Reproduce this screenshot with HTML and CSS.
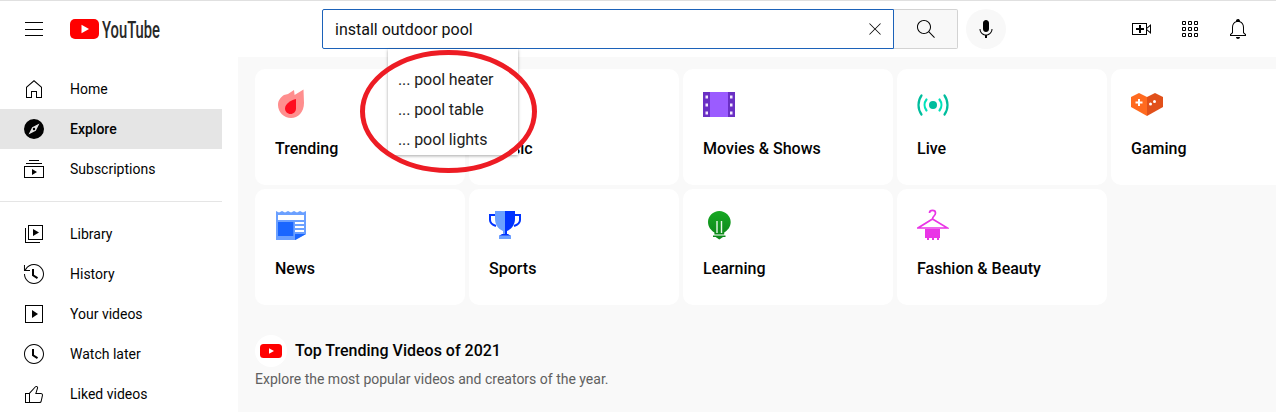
FILE: index.html
```html
<!DOCTYPE html>
<html lang="en">
<head>
<meta charset="utf-8">
<title>YouTube Explore</title>
<link rel="stylesheet" href="styles.css">
</head>
<body>
<header class="topbar">
  <div class="brand">
    <svg class="burger" viewBox="0 0 24 24"><path d="M3 5h18v1H3zM3 12h18v1H3zM3 18h18v1H3z"/></svg>
    <svg class="logo" viewBox="0 0 90 20">
      <rect x="0" y="0" width="29" height="20" rx="5" fill="#f00"/>
      <path d="M11.5 5.7 19 10l-7.500 4.300z" fill="#fff"/>
      <text x="32" y="18.500" class="wordmark" textLength="58" lengthAdjust="spacingAndGlyphs">YouTube</text>
    </svg>
  </div>
  <div class="search">
    <div class="search-box">
      <span class="query">install outdoor pool</span>
      <svg class="clear" viewBox="0 0 24 24"><path d="M12.700 12l6.150 6.150-.7.7L12 12.700l-6.150 6.150-.7-.7L11.300 12 5.150 5.850l.7-.7L12 11.300l6.150-6.150.7.7L12.700 12z"/></svg>
      <div class="suggest">
        <div class="suggest-row">... pool heater</div>
        <div class="suggest-row">... pool table</div>
        <div class="suggest-row">... pool lights</div>
      </div>
      <svg class="ring" viewBox="0 0 177 123"><ellipse cx="88.500" cy="61.500" rx="86" ry="59"/></svg>
    </div>
    <button class="search-btn"><svg class="ico" viewBox="0 0 24 24"><path d="M20.870 20.170l-5.590-5.590C16.350 13.350 17 11.750 17 10c0-3.870-3.130-7-7-7s-7 3.130-7 7 3.130 7 7 7c1.750 0 3.350-.65 4.580-1.710l5.590 5.590.7-.71zM10 16c-3.310 0-6-2.690-6-6s2.690-6 6-6 6 2.690 6 6-2.690 6-6 6z"/></svg></button>
    <button class="mic"><svg class="ico" viewBox="0 0 24 24"><path d="M12 3c-1.660 0-3 1.370-3 3.070v5.860C9 13.630 10.340 15 12 15s3-1.370 3-3.070V6.070C15 4.370 13.660 3 12 3zm6.500 9h-1c0 3.030-2.470 5.500-5.500 5.500S6.500 15.030 6.500 12h-1c0 3.240 2.390 5.930 5.500 6.410V21h2v-2.590c3.110-.48 5.500-3.170 5.500-6.410z"/></svg></button>
  </div>
  <div class="actions">
    <span class="action"><svg class="ico" viewBox="0 0 24 24"><path d="M14 13h-3v3H9v-3H6v-2h3V8h2v3h3v2zm3-2.500l4-3.500v10l-4-3.500V18H2V6h15v4.500zM16 7H3v10h13V7zm1 4.800v.4l3 2.600V9.200l-3 2.600z"/></svg></span>
    <span class="action"><svg class="ico" viewBox="0 0 24 24"><path d="M4.500 4.500h3v3h-3zM10.500 4.500h3v3h-3zM16.500 4.500h3v3h-3zM4.500 10.500h3v3h-3zM10.500 10.500h3v3h-3zM16.500 10.500h3v3h-3zM4.500 16.500h3v3h-3zM10.500 16.500h3v3h-3zM16.500 16.500h3v3h-3z" fill="none" stroke="#030303" stroke-width="1"/></svg></span>
    <span class="action"><svg class="ico" viewBox="0 0 24 24"><path d="M10 20h4c0 1.100-.9 2-2 2s-2-.9-2-2zm10-2.650V19H4v-1.650l2-1.880v-5.150C6 7.400 7.560 5.100 10 4.340v-.38c0-1.420 1.490-2.500 2.990-1.760.65.32 1.010 1.030 1.010 1.760v.39c2.440.75 4 3.060 4 5.980v5.150l2 1.870zm-1 .42-2-1.880v-5.470c0-2.470-1.190-4.360-3.130-5.100-1.260-.53-2.640-.5-3.840.03C8.150 6.110 7 7.990 7 10.420v5.470l-2 1.880V18h14v-.23z"/></svg></span>
  </div>
</header>

<div class="page">
  <nav class="sidebar">
    <div class="nav-group">
      <a class="nav-item"><svg class="ico" viewBox="0 0 24 24"><path d="M12 4.440l7 6.090V20h-4v-6H9v6H5v-9.470l7-6.090m0-1.320l-8 6.960V21h6v-6h4v6h6V10.080l-8-6.960z"/></svg><span>Home</span></a>
      <a class="nav-item active"><svg class="ico" viewBox="0 0 24 24"><path fill-rule="evenodd" d="M12 2a10 10 0 1 0 0 20 10 10 0 0 0 0-20zm5.500 4.500-3.700 7.300-7.300 3.700 3.700-7.300 7.300-3.700zM12 10.800a1.200 1.200 0 1 0 0 2.400 1.200 1.200 0 0 0 0-2.400z"/></svg><span>Explore</span></a>
      <a class="nav-item"><svg class="ico" viewBox="0 0 24 24"><path d="M10 18v-6l5 3-5 3zm7-15H7v1h10V3zm3 3H4v1h16V6zm2 3H2v12h20V9zM3 10h18v10H3V10z"/></svg><span>Subscriptions</span></a>
    </div>
    <div class="nav-group">
      <a class="nav-item"><svg class="ico" viewBox="0 0 24 24"><path d="M11 7l6 3.500-6 3.500V7zm7 13H4V6H3v15h15v-1zm3-2H6V3h15v15zM7 17h13V4H7v13z"/></svg><span>Library</span></a>
      <a class="nav-item"><svg class="ico" viewBox="0 0 24 24"><path d="M14.970 16.950 10 13.870V7h2v5.760l4.030 2.490-1.060 1.700zM22 12c0 5.510-4.490 10-10 10S2 17.510 2 12h1c0 4.960 4.040 9 9 9s9-4.040 9-9-4.040-9-9-9C8.810 3 5.920 4.640 4.280 7.380c-.11.18-.22.37-.31.56L3.940 8H8v1H1.960V3h1v4.740c.04-.09.07-.17.11-.25.11-.22.23-.42.35-.63C5.220 3.860 8.510 2 12 2c5.510 0 10 4.490 10 10z"/></svg><span>History</span></a>
      <a class="nav-item"><svg class="ico" viewBox="0 0 24 24"><path d="M10 8l6 4-6 4V8zm11-5v18H3V3h18zm-1 1H4v16h16V4z"/></svg><span>Your videos</span></a>
      <a class="nav-item"><svg class="ico" viewBox="0 0 24 24"><path d="M14.970 16.950 10 13.870V7h2v5.760l4.030 2.490-1.060 1.700zM12 3c-4.960 0-9 4.040-9 9s4.040 9 9 9 9-4.040 9-9-4.040-9-9-9m0-1c5.520 0 10 4.480 10 10s-4.480 10-10 10S2 17.520 2 12 6.480 2 12 2z"/></svg><span>Watch later</span></a>
      <a class="nav-item"><svg class="ico" viewBox="0 0 24 24"><path d="M18.770 11h-4.230l1.520-4.940C16.380 5.030 15.540 4 14.380 4c-.58 0-1.140.24-1.520.65L7 11H3v10h14.430c1.060 0 1.980-.67 2.190-1.610l1.340-6c.27-1.240-.78-2.390-2.190-2.390zM7 20H4v-8h3v8zm12.980-6.830-1.340 6c-.1.48-.61.83-1.210.83H8v-8.610l5.600-6.060c.19-.21.480-.33.780-.33.260 0 .5.110.63.300.07.100.15.260.09.470l-1.520 4.940-.4 1.290h5.580c.41 0 .8.170 1.030.46.130.15.260.4.190.71z"/></svg><span>Liked videos</span></a>
    </div>
  </nav>

  <main class="content">
    <section class="grid">
      <a class="card"><svg class="card-ico" viewBox="0 0 32 32"><path d="M19 1l.6 5L28.500 .5 29 14c0 9-6 15-13 15S3 23 3 16c0-5 3-8 6-10l4-1z" fill="#ff8e8e"/><path d="M21 10v9.500c0 3-2.500 5.500-5.500 5.500S10 22.500 10 19.500C10 15 16 11 21 10z" fill="#ff0d20"/></svg><span class="card-title">Trending</span></a>
      <a class="card"><span class="card-ico"></span><span class="card-title">Music</span></a>
      <a class="card"><svg class="card-ico" viewBox="0 0 32 32"><rect x="0" y="3" width="32" height="25" fill="#9b5cff"/><path d="M0 3h7v25H0zM25 3h7v25h-7z" fill="#6a2fc4"/><path d="M2.500 6.500h2.500v3H2.500zM2.500 14.500h2.500v3H2.500zM2.500 22.500h2.500v3H2.500zM27 6.500h2.500v3H27zM27 14.500h2.500v3H27zM27 22.500h2.500v3H27z" fill="#f1e8ff"/></svg><span class="card-title">Movies &amp; Shows</span></a>
      <a class="card"><svg class="card-ico" viewBox="0 0 32 32"><circle cx="16" cy="16" r="4" fill="#00bd9d"/><g fill="none" stroke-width="2.200" stroke-linecap="round"><path d="M9.500 10.500c-2.500 3.200-2.500 7.800 0 11M22.500 10.500c2.500 3.200 2.500 7.800 0 11" stroke="#00e2bb"/><path d="M4.500 6.500c-4 5.500-4 13.500 0 19M27.500 6.500c4 5.500 4 13.500 0 19" stroke="#00bd9d"/></g></svg><span class="card-title">Live</span></a>
      <a class="card"><svg class="card-ico" viewBox="0 0 32 32"><path d="M0 8l8-4 8 4v19L0 18z" fill="#ff6a1f"/><path d="M16 8l8-4 8 4v10l-16 9z" fill="#e1501a"/><path d="M7 10h2v2.500h2.500v2H9V17H7v-2.500H4.500v-2H7z" fill="#fff"/><circle cx="19.500" cy="15" r="1.500" fill="#fff"/><circle cx="23.500" cy="12.500" r="1.500" fill="#fff"/></svg><span class="card-title">Gaming</span></a>
      <a class="card"><svg class="card-ico" viewBox="0 0 32 32"><path d="M1 2l3 1.500L7 2l3 1.500L13 2l3 1.500L19 2l3 1.500L25 2l3 1.500L31 2v23l-10.500 6H1z" fill="#6ba0ff"/><path d="M3 6h26v5H3zM20 13h9v2h-9zM20 17h9v2h-9zM20 21h9v2h-9z" fill="#fff"/><path d="M3 13h15.300v14H3zM20 31v-6h11z" fill="#1a66ff"/></svg><span class="card-title">News</span></a>
      <a class="card"><svg class="card-ico" viewBox="0 0 32 32"><path d="M6 2h10v24h-2v-4C9 20 6 15 6 10z" fill="#6ba0ff"/><path d="M16 2h10v8c0 5-3 10-8 12v4h-2z" fill="#0033ff"/><path d="M6 6H1v5c0 3 3 5 6 6M26 6h5v5c0 3-3 5-6 6" fill="none" stroke="#0033ff" stroke-width="2"/><path d="M13 25h6l3 2H10z" fill="#0033ff"/><path d="M10 26.500h12V30H10z" fill="#6ba0ff"/></svg><span class="card-title">Sports</span></a>
      <a class="card"><svg class="card-ico" viewBox="0 0 32 32"><defs><linearGradient id="bulb" x1="0" y1="0" x2="0" y2="1"><stop offset="0" stop-color="#18a824"/><stop offset="1" stop-color="#0d8a1a"/></linearGradient></defs><path d="M16.300 2C22.500 2 27.700 7 27.700 13c0 5-3.200 8.500-6.500 10.500v2H11.400v-2C8.200 21.500 5 18 5 13 5 7 10.100 2 16.300 2z" fill="url(#bulb)"/><path d="M14 12v12M18.500 12v12" fill="none" stroke="#e8f7e8" stroke-width="1.400"/><path d="M10 26.500h12.500v1.500h-2.500l-3.700 2.500-3.700-2.500H10z" fill="#0d8a1a"/></svg><span class="card-title">Learning</span></a>
      <a class="card"><svg class="card-ico" viewBox="0 0 32 32"><path d="M12.500 4c0-3.500 6-3.500 6 0 0 3-3 3-3 6L1 19h29.500L15.500 10" fill="none" stroke="#e935e6" stroke-width="1.700"/><path d="M8 20h15v9h-1v2h-2v-2h-3v2h-2v-2h-3v2h-2v-2H8z" fill="#e935e6"/></svg><span class="card-title">Fashion &amp; Beauty</span></a>
    </section>

    <section class="promo">
      <div class="promo-head">
        <span class="promo-badge"><svg class="promo-logo" viewBox="0 0 22 14"><rect width="22" height="14" rx="3.500" fill="#f00"/><path d="M9 4.300 14 7l-5 2.700z" fill="#fff"/></svg></span>
        <h2 class="promo-title">Top Trending Videos of 2021</h2>
      </div>
      <p class="promo-sub">Explore the most popular videos and creators of the year.</p>
    </section>
  </main>
</div>
</body>
</html>
```

FILE: styles.css
```css
* { box-sizing: border-box; }

html, body {
  margin: 0;
  height: 414px;
  overflow: hidden;
}

body {
  font-family: Roboto, "Liberation Sans", sans-serif;
  color: #0f0f0f;
  background: #fff;
  border-top: 1px solid #e0e0e0;
}

.ico {
  width: 24px;
  height: 24px;
  display: block;
  fill: #030303;
}

/* Top bar */
.topbar {
  height: 56px;
  display: flex;
  align-items: center;
  background: #fff;
}

.brand {
  width: 322px;
  flex: none;
  display: flex;
  align-items: center;
  padding-left: 22px;
}

.burger {
  width: 24px;
  height: 24px;
  fill: #030303;
}

.logo {
  width: 90px;
  height: 20px;
  margin-left: 24px;
  overflow: visible;
}

.wordmark {
  font-family: Roboto, sans-serif;
  font-weight: 500;
  font-size: 24px;
  fill: #282828;
}

.search {
  display: flex;
  align-items: center;
}

.search-box {
  position: relative;
  width: 572px;
  height: 40px;
  display: flex;
  align-items: center;
  justify-content: space-between;
  padding: 0 6px 0 12px;
  border: 1px solid #1c62b9;
  border-radius: 2px 0 0 2px;
  background: #fff;
}

.query {
  font-size: 16px;
  color: #111;
}

.clear {
  width: 24px;
  height: 24px;
  fill: #030303;
  transform: scale(.85);
}

.suggest {
  position: absolute;
  top: 39px;
  left: 65px;
  width: 130px;
  height: 106px;
  padding-top: 16px;
  background: #fff;
  box-shadow: 0 1px 3px rgba(0, 0, 0, .35);
  z-index: 5;
}

.suggest-row {
  height: 30px;
  line-height: 30px;
  padding-left: 10px;
  font-size: 16px;
  letter-spacing: -.1px;
  color: #212121;
}

.ring {
  position: absolute;
  left: 37px;
  top: 40px;
  width: 177px;
  height: 123px;
  z-index: 6;
  fill: none;
  stroke: #ed1c24;
  stroke-width: 5;
}

.search-btn {
  width: 64px;
  height: 40px;
  padding: 0;
  display: flex;
  align-items: center;
  justify-content: center;
  background: #f8f8f8;
  border: 1px solid #d3d3d3;
  border-left: 0;
  border-radius: 0 2px 2px 0;
}

.mic {
  width: 40px;
  height: 40px;
  margin-left: 8px;
  padding: 0;
  display: flex;
  align-items: center;
  justify-content: center;
  border: 0;
  border-radius: 50%;
  background: #f8f8f8;
}

.actions {
  margin-left: auto;
  padding-right: 18px;
  display: flex;
  gap: 8px;
}

.action {
  width: 40px;
  height: 40px;
  display: flex;
  align-items: center;
  justify-content: center;
}

/* Page */
.page {
  display: flex;
  height: 355px;
}

.sidebar {
  width: 238px;
  flex: none;
  padding-right: 16px;
  background: #fff;
}

.nav-group {
  padding: 12px 0;
}

.nav-group + .nav-group {
  border-top: 1px solid #e5e5e5;
}

.nav-item {
  height: 40px;
  display: flex;
  align-items: center;
  gap: 24px;
  padding-left: 22px;
  font-size: 14px;
  color: #030303;
}

.nav-item.active {
  background: #e5e5e5;
  font-weight: 500;
}

/* Content */
.content {
  flex: 1;
  min-width: 0;
  padding: 12px 0 0 17px;
  background: #f9f9f9;
  overflow: hidden;
}

.grid {
  display: grid;
  grid-template-columns: repeat(5, 210px);
  gap: 4px;
}

.card {
  height: 116px;
  padding: 20px;
  background: #fff;
  border-radius: 10px;
  display: flex;
  flex-direction: column;
}

.card-ico {
  width: 32px;
  height: 32px;
  display: block;
  flex: none;
}

.card-title {
  margin-top: 17px;
  font-size: 16px;
  line-height: 22px;
  font-weight: 500;
  color: #030303;
  white-space: nowrap;
}

.promo {
  margin-top: 30px;
}

.promo-head {
  display: flex;
  align-items: center;
  gap: 8px;
}

.promo-badge {
  width: 32px;
  height: 32px;
  border-radius: 50%;
  background: #fff;
  display: flex;
  align-items: center;
  justify-content: center;
}

.promo-logo {
  width: 22px;
  height: 14px;
  display: block;
}

.promo-title {
  margin: 0;
  font-size: 16px;
  line-height: 22px;
  font-weight: 500;
  color: #030303;
}

.promo-sub {
  margin: 2px 0 0;
  font-size: 14px;
  line-height: 20px;
  color: #606060;
}
```
